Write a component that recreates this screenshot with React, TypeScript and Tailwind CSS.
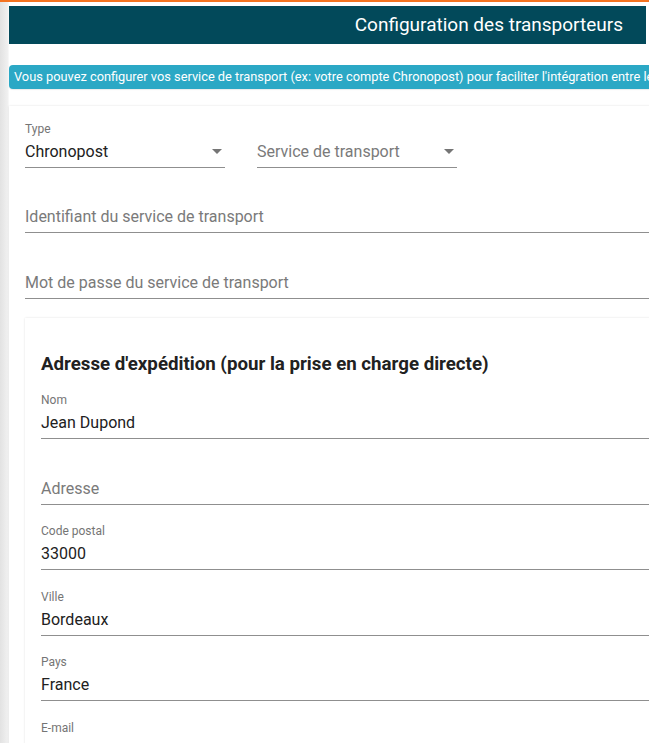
import React from 'react'

type FieldProps = {
  label?: string
  value?: string
  placeholder?: string
  width?: string
  select?: boolean
  className?: string
}

function Field({ label, value, placeholder, width = 'w-full', select, className = '' }: FieldProps) {
  return (
    <div className={`${width} shrink-0 pt-[2px] ${className}`}>
      <div className="h-[14px] text-[12px] leading-[14px] text-[#757575]">{label}</div>
      <div className="relative flex h-[32px] items-center border-b border-[#8f8f8f]">
        {value ? (
          <span className="text-[16px] text-[#212121]">{value}</span>
        ) : (
          <span className="text-[16px] text-[#7a7a7a]">{placeholder}</span>
        )}
        {select && (
          <svg className="absolute right-[3px] top-[13px]" width="10" height="5" viewBox="0 0 10 5">
            <path d="M0 0l5 5 5-5z" fill="#757575" />
          </svg>
        )}
      </div>
    </div>
  )
}

export default function App() {
  return (
    <div className="relative h-[743px] w-[649px] overflow-hidden bg-white font-['Roboto',sans-serif]">
      <div className="h-[2px] bg-[#f47321]" />
      <div className="flex">
        <div className="h-[741px] w-[9px] shrink-0 border-r border-[#f7f7f7] bg-gradient-to-r from-[#e2e2e2] to-[#f1f1f1]" />
        <main className="w-[820px] shrink-0 pt-[4px]">
          <header className="flex h-[38px] w-[637px] items-center justify-end bg-[#02495a] pr-[23px] text-[19px] text-white">
            Configuration des transporteurs
          </header>

          <div className="mt-[21px] flex h-[24px] items-center whitespace-nowrap rounded-[4px] bg-[#2ba8c5] px-[5px] text-[12.8px] text-white shadow-[0_1px_1px_rgba(0,0,0,0.08)]">
            Vous pouvez configurer vos service de transport (ex: votre compte Chronopost) pour faciliter l'intégration entre les
            commandes et vos expéditions.
          </div>

          <section className="mt-[17px] bg-white px-[16px] pb-[24px] pt-[14px] shadow-[0_0_2px_rgba(0,0,0,0.12)]">
            <div className="flex gap-[32px]">
              <Field label="Type" value="Chronopost" width="w-[200px]" select />
              <Field placeholder="Service de transport" width="w-[200px]" select />
            </div>
            <Field placeholder="Identifiant du service de transport" className="mt-[17px]" />
            <Field placeholder="Mot de passe du service de transport" className="mt-[18px]" />

            <div className="mt-[19px] bg-white px-[16px] pb-[24px] pt-[34px] shadow-[0_0_2px_rgba(0,0,0,0.12)]">
              <h2 className="text-[18.7px] font-bold leading-[24px] text-[#212121]">
                Adresse d'expédition (pour la prise en charge directe)
              </h2>
              <Field label="Nom" value="Jean Dupond" className="mt-[15px]" />
              <Field placeholder="Adresse" className="mt-[18px]" />
              <Field label="Code postal" value="33000" className="mt-[17px]" />
              <Field label="Ville" value="Bordeaux" className="mt-[18px]" />
              <Field label="Pays" value="France" className="mt-[17px]" />
              <Field label="E-mail" value="" className="mt-[18px]" />
            </div>
          </section>
        </main>
      </div>
    </div>
  )
}
